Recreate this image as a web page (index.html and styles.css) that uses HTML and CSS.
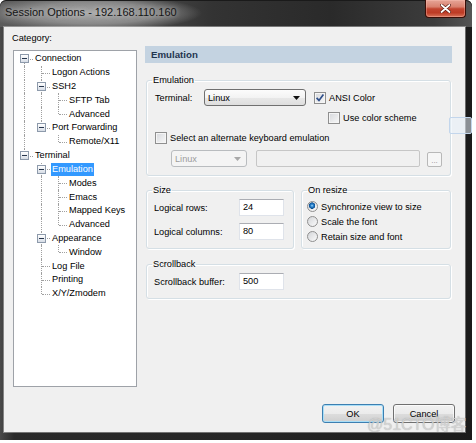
FILE: index.html
```html
<!DOCTYPE html>
<html>
<head>
<meta charset="utf-8">
<title>Session Options</title>
<link rel="stylesheet" href="styles.css">
</head>
<body>
<div class="window">
  <div class="titlebar">
    <span class="title">Session Options - 192.168.110.160</span>
    <span class="close"><svg width="11" height="9" viewBox="0 0 11 9"><path d="M1.5 1 L9.5 8 M9.5 1 L1.5 8" stroke="#5a1a10" stroke-width="3.2" stroke-linecap="round"/><path d="M1.5 1 L9.5 8 M9.5 1 L1.5 8" stroke="#fff" stroke-width="1.8" stroke-linecap="round"/></svg></span>
  </div>
  <div class="client">
    <div class="main">
      <div class="left">
        <div class="cat-label">Category:</div>
        <div class="tree">
          <div class="row"><span class="c f"><i class="x"></i></span><span class="lbl">Connection</span></div>
          <div class="row"><span class="c v"></span><span class="c t"></span><span class="lbl">Logon Actions</span></div>
          <div class="row"><span class="c v"></span><span class="c t"><i class="x"></i></span><span class="lbl">SSH2</span></div>
          <div class="row"><span class="c v"></span><span class="c v"></span><span class="c t"></span><span class="lbl">SFTP Tab</span></div>
          <div class="row"><span class="c v"></span><span class="c v"></span><span class="c l"></span><span class="lbl">Advanced</span></div>
          <div class="row"><span class="c v"></span><span class="c l"><i class="x"></i></span><span class="lbl">Port Forwarding</span></div>
          <div class="row"><span class="c v"></span><span class="c"></span><span class="c l"></span><span class="lbl">Remote/X11</span></div>
          <div class="row"><span class="c l"><i class="x"></i></span><span class="lbl">Terminal</span></div>
          <div class="row"><span class="c"></span><span class="c t"><i class="x"></i></span><span class="lbl sel">Emulation</span></div>
          <div class="row"><span class="c"></span><span class="c v"></span><span class="c t"></span><span class="lbl">Modes</span></div>
          <div class="row"><span class="c"></span><span class="c v"></span><span class="c t"></span><span class="lbl">Emacs</span></div>
          <div class="row"><span class="c"></span><span class="c v"></span><span class="c t"></span><span class="lbl">Mapped Keys</span></div>
          <div class="row"><span class="c"></span><span class="c v"></span><span class="c l"></span><span class="lbl">Advanced</span></div>
          <div class="row"><span class="c"></span><span class="c t"><i class="x"></i></span><span class="lbl">Appearance</span></div>
          <div class="row"><span class="c"></span><span class="c v"></span><span class="c l"></span><span class="lbl">Window</span></div>
          <div class="row"><span class="c"></span><span class="c t"></span><span class="lbl">Log File</span></div>
          <div class="row"><span class="c"></span><span class="c t"></span><span class="lbl">Printing</span></div>
          <div class="row"><span class="c"></span><span class="c l"></span><span class="lbl">X/Y/Zmodem</span></div>
        </div>
      </div>
      <div class="right">
        <div class="header">Emulation</div>
        <fieldset class="grp emu">
          <legend>Emulation</legend>
          <div class="erow r1">
            <span class="term-lbl">Terminal:</span>
            <span class="combo"><span>Linux</span><svg class="arr" width="7" height="4" viewBox="0 0 7 4"><path d="M0 0H7L3.5 4Z" fill="#111"/></svg></span>
            <span class="chk on ansi"><svg width="10" height="10" viewBox="0 0 10 10"><path d="M1.6 4.8 L4 7.4 L8.4 1.6" fill="none" stroke="#2f4f8a" stroke-width="1.7"/></svg></span>
            <span class="ck-lbl">ANSI Color</span>
          </div>
          <div class="erow r2">
            <span class="chk"></span><span class="ck-lbl">Use color scheme</span>
          </div>
          <div class="erow r3">
            <span class="chk"></span><span class="ck-lbl">Select an alternate keyboard emulation</span>
          </div>
          <div class="erow r4">
            <span class="combo dis"><span>Linux</span><svg class="arr" width="7" height="4" viewBox="0 0 7 4"><path d="M0 0H7L3.5 4Z" fill="#a8a8a8"/></svg></span>
            <span class="field dis"></span>
            <span class="dots">...</span>
          </div>
        </fieldset>
        <div class="pair">
          <fieldset class="grp size">
            <legend>Size</legend>
            <div class="frow"><span class="flbl">Logical rows:</span><span class="inp">24</span></div>
            <div class="frow second"><span class="flbl">Logical columns:</span><span class="inp">80</span></div>
          </fieldset>
          <fieldset class="grp resize">
            <legend>On resize</legend>
            <div class="rrow"><span class="rad on"></span><span>Synchronize view to size</span></div>
            <div class="rrow"><span class="rad"></span><span>Scale the font</span></div>
            <div class="rrow"><span class="rad"></span><span>Retain size and font</span></div>
          </fieldset>
        </div>
        <fieldset class="grp scroll">
          <legend>Scrollback</legend>
          <div class="frow"><span class="flbl">Scrollback buffer:</span><span class="inp">500</span></div>
        </fieldset>
      </div>
    </div>
    <div class="footer">
      <button class="btn ok">OK</button>
      <button class="btn">Cancel</button>
    </div>
  </div>
  <div class="artifact"></div>
  <div class="watermark">@51CTO博客</div>
</div>
</body>
</html>
```
FILE: styles.css
```css
* { box-sizing: border-box; }
html, body { margin: 0; padding: 0; background: #fff; }
body {
  font-family: "Liberation Sans", Arial, "Noto Sans CJK SC", sans-serif;
  font-size: 9.2px;
  color: #000;
}

.window {
  position: relative;
  width: 472px;
  height: 440px;
  display: flex;
  flex-direction: column;
  background: linear-gradient(90deg, #4a4a4a 0, #2a2a2a 3%, #262626 50%, #1b1b1b 100%);
  border-radius: 6px 6px 0 0;
}

.titlebar {
  height: 27px;
  flex: none;
  display: flex;
  align-items: flex-start;
  border-radius: 6px 6px 0 0;
  background:
    radial-gradient(ellipse 110px 18px at 92px 13px, rgba(175,175,175,0.95) 0, rgba(150,150,150,0.8) 60%, rgba(120,120,120,0) 100%),
    linear-gradient(90deg, #5c5c5c 0, #505050 25%, #333 45%, #2a2a2a 70%, #3c3c3c 92%, #555 100%);
  box-shadow: inset 0 1px 0 #1a1a1a;
}
.title {
  margin: 6px 0 0 5px;
  font-size: 11px;
  line-height: 13px;
  color: #151515;
  text-shadow: 0 0 5px rgba(230,230,230,0.7);
}
.close {
  margin-left: auto;
  margin-right: 6px;
  width: 41px;
  height: 18px;
  display: flex;
  align-items: center;
  justify-content: center;
  border: 1px solid #3a0d06;
  border-top: none;
  border-radius: 0 0 4px 4px;
  background: linear-gradient(#e6a597 0%, #d9816f 40%, #c24530 52%, #bd3b25 75%, #d9735a 100%);
  box-shadow: inset 0 0 0 1px rgba(255,200,190,0.35);
}

.client {
  flex: 1;
  margin: 0 7px 8px 4px;
  background: #f0f0f0;
  display: flex;
  flex-direction: column;
  padding: 0 10px 9px 8px;
  box-shadow: 0 0 0 1px rgba(255,255,255,0.35);
}
.main { flex: 1; display: flex; }

.left { width: 125px; flex: none; }
.cat-label { margin-top: 4px; line-height: 14px; height: 14px; }
.tree {
  margin: 5px 0 0 1px;
  width: 124px;
  height: 337px;
  background: #fff;
  border: 1px solid #9ea2a8;
  padding: 1px 0 0 2px;
}
.row {
  height: 13.82px;
  display: flex;
  align-items: center;
  white-space: nowrap;
}
.c {
  position: relative;
  width: 17px;
  height: 100%;
  flex: none;
}
.c.v::before, .c.t::before, .c.l::before, .c.f::before {
  content: "";
  position: absolute;
  left: 8px;
  top: 0;
  bottom: 0;
  border-left: 1px dotted #a0a0a0;
}
.c.l::before { bottom: 50%; }
.c.f::before { top: 50%; }
.c.t::after, .c.l::after, .c.f::after {
  content: "";
  position: absolute;
  left: 9px;
  right: 0;
  top: 50%;
  border-top: 1px dotted #a0a0a0;
}
.x {
  position: absolute;
  left: 4px;
  top: 50%;
  width: 9px;
  height: 9px;
  margin-top: -4.5px;
  border: 1px solid #8d9aab;
  background: linear-gradient(#ffffff, #d7dde6);
  z-index: 1;
}
.x::after {
  content: "";
  position: absolute;
  left: 1px;
  right: 1px;
  top: 3px;
  height: 1px;
  background: #27364d;
}
.lbl {
  margin-left: 1px;
  padding: 0 1px;
  line-height: 13px;
}
.lbl.sel { background: #3399ff; color: #fff; }

.right { width: 307px; margin-left: 8px; padding-top: 19px; flex: none; }
.header {
  height: 17px;
  line-height: 17px;
  padding-left: 6px;
  background: #c4d3e1;
  font-weight: bold;
  font-size: 9.7px;
  color: #1f3550;
}

.grp {
  margin: 0 1px;
  padding: 3px 7px 8px 7px;
  border: 1px solid #d5dfe5;
  border-radius: 3px;
  min-width: 0;
  box-shadow: inset 1px 1px 0 #fff, 1px 1px 0 #fff;
}
.grp legend {
  padding: 0 1px;
  margin-left: -2px;
  line-height: 12px;
  height: 12px;
}
.emu { margin-top: 11px; }

.erow { display: flex; align-items: center; padding-left: 1px; }
.r1 { height: 17px; }
.term-lbl { width: 49px; flex: none; }
.combo {
  width: 102px;
  height: 17px;
  display: flex;
  align-items: center;
  padding-left: 3px;
  border: 1px solid #707070;
  border-radius: 3px;
  background: linear-gradient(#fcfcfc 0%, #f3f3f3 50%, #e8e8e8 51%, #dedede 100%);
}
.combo .arr { margin-left: auto; margin-right: 5px; }
.combo.dis {
  width: 76px;
  margin-left: 16px;
  border-color: #b9bcbf;
  background: #f4f4f4;
  color: #9c9c9c;
}
.chk {
  width: 12px;
  height: 12px;
  flex: none;
  border: 1px solid #8f8f8f;
  background: linear-gradient(135deg, #d6d8dc, #f8f8f8);
  box-shadow: inset 0 0 0 1px #f5f5f5;
  display: flex;
  align-items: center;
  justify-content: center;
}
.ansi { margin-left: 8px; }
.ck-lbl { margin-left: 3px; white-space: nowrap; }
.r2 { height: 12px; margin-top: 6px; padding-left: 174px; }
.r3 { height: 12px; margin-top: 8px; }
.r4 { height: 17px; margin-top: 6px; align-items: flex-end; }
.field.dis {
  width: 164px;
  height: 17px;
  margin-left: 9px;
  border: 1px solid #c6c6c6;
  border-radius: 2px;
  background: #f0f0f0;
}
.dots {
  width: 15px;
  height: 15px;
  margin-left: 7px;
  border: 1px solid #b8b8b8;
  border-radius: 2px;
  background: #f6f6f6;
  color: #8f8f8f;
  font-size: 8px;
  line-height: 15px;
  text-align: center;
}

.pair { display: flex; gap: 7px; margin: 8px 1px 0; }
.pair .grp { margin: 0; }
.size { width: 148px; }
.resize { width: 150px; padding-bottom: 3px; }
.frow { display: flex; align-items: center; height: 17px; }
.frow.second { margin-top: 7px; }
.flbl { width: 85px; flex: none; }
.inp {
  width: 45px;
  height: 17px;
  padding-left: 3px;
  line-height: 15px;
  background: #fff;
  border: 1px solid #dfe3ea;
  border-top-color: #abadb3;
}
.rrow { display: flex; align-items: center; height: 15px; margin-left: -2px; white-space: nowrap; }
.rad {
  width: 11px;
  height: 11px;
  flex: none;
  margin-right: 3px;
  border-radius: 50%;
  border: 1px solid #8f8f8f;
  background: linear-gradient(135deg, #d3d5d8, #fbfbfb);
}
.rad.on {
  background:
    radial-gradient(circle at 45% 40%, #a9dcfb 0, #2c86d2 1.3px, #0d4e8f 3px, rgba(0,0,0,0) 3.4px),
    linear-gradient(135deg, #d3d5d8, #fbfbfb);
}
.scroll { margin-top: 9px; }

.footer { display: flex; justify-content: flex-end; gap: 9px; height: 19px; flex: none; }
.btn {
  width: 62px;
  height: 19px;
  padding: 0;
  font: inherit;
  color: #000;
  border: 1px solid #707070;
  border-radius: 3px;
  background: linear-gradient(#f2f2f2 0%, #ebebeb 50%, #dddddd 51%, #cfcfcf 100%);
  box-shadow: inset 0 0 0 1px rgba(255,255,255,0.7);
}
.btn.ok {
  border-color: #3c7fb1;
  box-shadow: inset 0 0 0 1px #a9def7;
}

.artifact {
  position: absolute;
  left: 449px;
  top: 117px;
  width: 23px;
  height: 17px;
  border: 1px solid #c3d6ec;
  border-radius: 2px;
  background: rgba(232,240,250,0.55);
}
.watermark {
  position: absolute;
  left: 367px;
  top: 416px;
  font-size: 16px;
  line-height: 17px;
  color: rgba(218,218,218,0.8);
  text-shadow: 0 0 1px rgba(130,130,130,0.6);
  white-space: nowrap;
}
```
